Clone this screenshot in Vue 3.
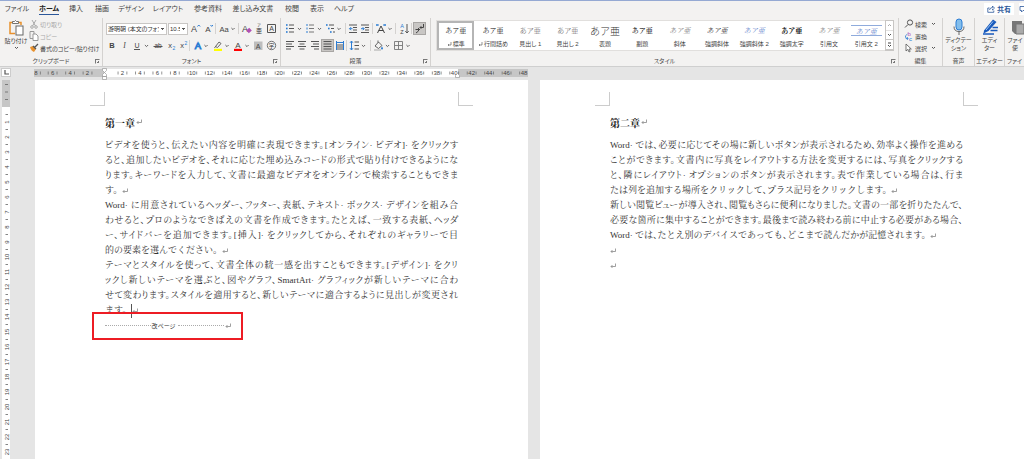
<script setup>
const tabs = ['ファイル', 'ホーム', '挿入', '描画', 'デザイン', 'レイアウト', '参考資料', '差し込み文書', '校閲', '表示', 'ヘルプ']

const chev = (x) => `<path d="M${x - 1.6} 6l1.6 1.6L${x + 1.6} 6" fill="none" stroke="#555" stroke-width=".9"/>`
const letter = (t, x, y, size, extra = '') => `<text x="${x}" y="${y}" font-size="${size}" text-anchor="middle" fill="#444" ${extra}>${t}</text>`
const lines = (list, color = '#555') => list.map(([x1, x2, y]) => `<path d="M${x1} ${y}H${x2}" stroke="${color}" stroke-width="1"/>`).join('')
const dots = (list) => list.map(([x, y]) => `<rect x="${x}" y="${y}" width="1.6" height="1.6" fill="#2b7cd3"/>`).join('')
const stroke = (d, color = '#555', w = 1, extra = '') => `<path d="${d}" fill="none" stroke="${color}" stroke-width="${w}" ${extra}/>`

const fontTop = [
  { n: '拡大', w: 13, s: letter('A', 5, 10, 9) + stroke('M8.5 4.5l1.3-1.5 1.3 1.5', '#2b7cd3') },
  { n: '縮小', w: 13, s: letter('A', 6, 10, 8) + stroke('M8.5 3l1.2 1.4L10.9 3', '#2b7cd3') },
  { sep: true },
  { n: '文字種の変換', w: 21, s: letter('Aa', 7, 9.5, 7.5) + chev(16) },
  { sep: true },
  { n: '書式のクリア', w: 13, s: letter('A', 5, 9.5, 9) + '<path d="M6.3 8.3l3-2.5 2.5 2.6-3 2.8z" fill="#b24fb5"/>' },
  { n: 'ルビ', w: 12, s: letter('ア', 6, 5, 4) + letter('亜', 6, 11, 6) },
  { n: '囲み線', w: 13, s: stroke('M2.5 2.5h8v8h-8z') + letter('A', 6.5, 9.3, 7) }
]
const fontBottom = [
  { n: '太字', w: 12, s: letter('B', 6, 9, 7.5, 'font-weight="bold"') },
  { n: '斜体', w: 13, s: letter('I', 6.5, 9, 7.5, 'font-style="italic" font-family="Liberation Serif"') },
  { n: '下線', w: 20, s: letter('U', 6, 8.5, 7) + lines([[3, 9, 10.5]]) + chev(15.5) },
  { n: '取り消し線', w: 14, s: letter('ab', 7, 9, 6.5) + lines([[2.5, 11.5, 7.5]]) },
  { n: '下付き', w: 12, s: letter('x', 5, 9, 7.5) + letter('2', 9, 11, 5, 'style="fill:#2b7cd3"') },
  { n: '上付き', w: 12, s: letter('x', 5, 9, 7.5) + letter('2', 9, 5.5, 5, 'style="fill:#2b7cd3"') },
  { sep: true },
  { n: '文字の効果', w: 20, s: letter('A', 7, 10, 9.5, 'stroke="#2b7cd3" stroke-width="1" style="fill:#b7dcf5"') + chev(15) },
  { n: '蛍光ペン', w: 20, s: stroke('M4.5 7.5L8 3l2 1.5-3.5 4z M4.5 7.5L3.5 9', '#555', 0.9) + '<rect x="3" y="9.8" width="8" height="2.2" fill="#ffff00"/>' + chev(16) },
  { n: 'フォントの色', w: 20, s: letter('A', 7, 8.5, 8) + '<rect x="3" y="9.8" width="8" height="2.2" fill="#f00"/>' + chev(16) },
  { n: '網かけ', w: 14, s: '<rect x="3" y="2.5" width="8.5" height="8.5" fill="#bdbdbd"/>' + letter('A', 7.2, 9.5, 7) },
  { n: '囲い文字', w: 13, s: '<circle cx="6.5" cy="6.5" r="4.2" fill="none" stroke="#555" stroke-width=".8"/>' + letter('字', 6.5, 8.8, 6) }
]
const paraTop = [
  { n: '箇条書き', w: 20, s: dots([[2, 2.2], [2, 5.7], [2, 9.2]]) + lines([[5, 10, 3], [5, 10, 6.5], [5, 10, 10]]) + chev(15.5) },
  { n: '段落番号', w: 20, s: stroke('M3 2v2M3 5.5v2M3 9v2', '#2b7cd3') + lines([[5, 10, 3], [5, 10, 6.5], [5, 10, 10]], '#777') + chev(15.5) },
  { n: 'アウトライン', w: 21, s: dots([[2, 2.2], [4, 5.7], [6, 9.2]]) + lines([[5, 10, 3], [7, 10, 6.5], [9, 11, 10]]) + chev(15) },
  { sep: true },
  { n: 'インデントを減らす', w: 12, s: lines([[2, 10, 3], [6, 10, 5.5], [6, 10, 8], [2, 10, 10.5]]) + stroke('M5.5 6.7H2.5M4 5.2L2.5 6.7 4 8.2', '#2b7cd3') },
  { n: 'インデントを増やす', w: 13, s: lines([[2, 10, 3], [6, 10, 5.5], [6, 10, 8], [2, 10, 10.5]]) + stroke('M2 6.7h3M3.7 5.2l1.5 1.5-1.5 1.5', '#2b7cd3') },
  { sep: true },
  { n: '拡張書式', w: 21, s: stroke('M3.5 11L7 4l3.5 7M4.8 8.5h4.4', '#444') + stroke('M2 3h3M3 2v2M9 3h3M11 2v2', '#2b7cd3') + chev(16) },
  { sep: true },
  { n: '並べ替え', w: 14, s: letter('A', 5, 6, 5.5, 'style="fill:#2b7cd3"') + letter('Z', 5, 11.5, 5.5) + stroke('M10 2v9M8.3 9.2L10 11l1.7-1.8') },
  { sep: true },
  { n: '編集記号', w: 13, on: true, s: stroke('M10.5 2v3.5H7M8.3 4.2L7 5.5l1.3 1.3', '#444') + stroke('M7 7.5H2.5M5.5 6v3L3 11', '#444') }
]
const paraBottom = [
  { n: '左揃え', w: 12, s: lines([[2, 10, 2.5], [2, 8, 5], [2, 10, 7.5], [2, 7, 10]]) },
  { n: '中央揃え', w: 13, s: lines([[2, 10, 2.5], [3.5, 8.5, 5], [2, 10, 7.5], [3.5, 8.5, 10]]) },
  { n: '右揃え', w: 12, s: lines([[2, 10, 2.5], [4, 10, 5], [2, 10, 7.5], [5, 10, 10]]) },
  { n: '両端揃え', w: 13, on: true, s: lines([[2.5, 10.5, 2.5], [2.5, 10.5, 5], [2.5, 10.5, 7.5], [2.5, 10.5, 10]]) },
  { n: '均等割り付け', w: 12, s: lines([[2, 10, 6], [2, 10, 8], [2, 10, 10]]) + stroke('M2.5 2v9M9.5 2v9M2 3.5h8', '#2b7cd3') },
  { sep: true },
  { n: '行間', w: 22, s: stroke('M3.5 2v9M2 3.8L3.5 2 5 3.8M2 9.2L3.5 11 5 9.2', '#2b7cd3') + lines([[6.5, 11, 3], [6.5, 11, 6.5], [6.5, 11, 10]]) + chev(15.5) },
  { sep: true },
  { n: '塗りつぶし', w: 20, s: stroke('M3 7l3.5-4 3.5 3.5-3.5 3zM6 3.5V1.5', '#555', 0.9) + '<path d="M10 7.5q2 3 0 3t0-3z" fill="#2b7cd3"/>' + lines([[2, 9, 11]], '#aaa') + chev(15.5) },
  { n: '罫線', w: 21, s: stroke('M2.5 2.5h8v8h-8zM6.5 2.5v8M2.5 6.5h8', '#777', 0.9) + chev(16) }
]

const styles = [
  { label: '標準', mark: true, selected: true },
  { label: '行間詰め', mark: true },
  { label: '見出し 1', kind: 'gothic' },
  { label: '見出し 2', kind: 'gothic' },
  { label: '表題', kind: 'gothic large' },
  { label: '副題', kind: 'strong' },
  { label: '斜体', kind: 'italic light' },
  { label: '強調斜体', kind: 'italic' },
  { label: '強調斜体 2', kind: 'italic blue' },
  { label: '強調太字', kind: 'bold' },
  { label: '引用文', kind: 'italic light' },
  { label: '引用文 2', kind: 'italic blue ruled' }
]

const edits = [
  { label: '検索', arrow: true, s: '<circle cx="6" cy="3.5" r="2.6" fill="none" stroke="#555"/><path d="M4 5.5L1 8.5" stroke="#555"/>' },
  { label: '置換', s: '<text x="3.5" y="5" font-size="6" fill="#b24fb5">b</text><text x="5" y="9.5" font-size="6" fill="#2b7cd3">c</text><path d="M3.5 3Q0 4.5 2 7.5h2M3 6l1 1.5L3 9" fill="none" stroke="#2b7cd3" stroke-width=".8"/>' },
  { label: '選択', arrow: true, s: '<path d="M2 1v7l1.800-1.600L5 9l1.200-.6L5 6h2.300z" fill="#fff" stroke="#555" stroke-width=".8"/>' }
]

const PITCH = 8.73
const ORIGIN = 71
const hNumbers = [-8, -6, -4, -2, ...Array.from({ length: 24 }, (_, i) => (i + 1) * 2)].map((n) => ({ n: Math.abs(n), x: n === -8 ? 2 : ORIGIN + n * PITCH }))
const vNumbers = Array.from({ length: 23 }, (_, i) => ({ n: i + 1, y: 42 + i * 15 }))

const pages = [
  {
    title: '第一章',
    lines: [
      { t: 'ビデオを使うと、伝えたい内容を明確に表現できます。[オンライン· ビデオ]· をクリックす' },
      { t: 'ると、追加したいビデオを、それに応じた埋め込みコードの形式で貼り付けできるようにな' },
      { t: 'ります。キーワードを入力して、文書に最適なビデオをオンラインで検索することもできま' },
      { t: 'す。', end: true },
      { t: 'Word· に用意されているヘッダー、フッター、表紙、テキスト· ボックス· デザインを組み合' },
      { t: 'わせると、プロのようなできばえの文書を作成できます。たとえば、一致する表紙、ヘッダ' },
      { t: 'ー、サイドバーを追加できます。[挿入]· をクリックしてから、それぞれのギャラリーで目' },
      { t: '的の要素を選んでください。', end: true },
      { t: 'テーマとスタイルを使って、文書全体の統一感を出すこともできます。[デザイン]· をクリ' },
      { t: 'ックし新しいテーマを選ぶと、図やグラフ、SmartArt· グラフィックが新しいテーマに合わ' },
      { t: 'せて変わります。スタイルを適用すると、新しいテーマに適合するように見出しが変更され' },
      { t: 'ます。', end: true, caret: true }
    ],
    pageBreak: true
  },
  {
    title: '第二章',
    lines: [
      { t: 'Word· では、必要に応じてその場に新しいボタンが表示されるため、効率よく操作を進める' },
      { t: 'ことができます。文書内に写真をレイアウトする方法を変更するには、写真をクリックする' },
      { t: 'と、隣にレイアウト· オプションのボタンが表示されます。表で作業している場合は、行ま' },
      { t: 'たは列を追加する場所をクリックして、プラス記号をクリックします。', end: true },
      { t: '新しい閲覧ビューが導入され、閲覧もさらに便利になりました。文書の一部を折りたたんで、' },
      { t: '必要な箇所に集中することができます。最後まで読み終わる前に中止する必要がある場合、' },
      { t: 'Word· では、たとえ別のデバイスであっても、どこまで読んだかが記憶されます。', end: true },
      { t: '', end: true },
      { t: '', end: true }
    ]
  }
]
</script>

<template>
  <div class="app">
    <header class="tabbar">
      <nav class="tabs">
        <button v-for="t in tabs" :key="t" class="tab" :class="{ active: t === 'ホーム' }"><span>{{ t }}</span></button>
      </nav>
      <div class="share-area">
        <button class="share">
          <svg width="8" height="8" viewBox="0 0 8 8"><path d="M2.5 3H.8v4.300h6V5.500M2.500 5q.5-2.500 3-2.500V1L7.500 3.200 5.500 5V3.800" fill="none" stroke="#2b579a" stroke-width=".8" /></svg>
          共有
        </button>
        <button class="share comment" aria-label="コメント"><svg width="5" height="8" viewBox="0 0 5 8"><path d="M5 1.500H1v4h1.500V7L4 5.500h1" fill="none" stroke="#2b579a" stroke-width=".8" /></svg></button>
      </div>
    </header>

    <section class="ribbon">
      <div class="group clipboard">
        <div class="body clip">
          <button class="paste">
            <svg width="18" height="17" viewBox="0 0 18 17"><path d="M8 14.500H3V3.500h11V6" fill="none" stroke="#e8912d" stroke-width="1.500" /><path d="M5.500 4.500V2.500h2q1-2 2 0h2v2z" fill="#fff" stroke="#666" stroke-width=".9" /><rect x="9" y="7" width="7" height="9" fill="#fff" stroke="#666" /></svg>
            <span>貼り付け</span>
            <svg class="chev" viewBox="0 0 5 4"><path d="M1 1l1.500 1.500L4 1" /></svg>
          </button>
          <div class="stack">
            <button class="item off"><svg width="10" height="10" viewBox="0 0 10 10"><path d="M3 1l3.500 6M7 1L3.500 7" stroke="#aaa" /><circle cx="3" cy="8" r="1.300" fill="none" stroke="#aaa" /><circle cx="7" cy="8" r="1.300" fill="none" stroke="#aaa" /></svg>切り取り</button>
            <button class="item off"><svg width="10" height="10" viewBox="0 0 10 10"><path d="M4 7.500H1v-7h4V3" fill="none" stroke="#999" /><path d="M4 3h3l2 2v4.500H4z" fill="#fff" stroke="#999" /></svg>コピー</button>
            <button class="item"><svg width="10" height="10" viewBox="0 0 10 10"><path d="M1 4l3-1 3 3-2 3q-3-1-4-5z" fill="#e8912d" /><path d="M4 3l3 3M5.500 4.500L9 1" stroke="#555" stroke-width="1.300" /></svg>書式のコピー/貼り付け</button>
          </div>
        </div>
        <div class="foot"><span>クリップボード</span><i class="launch"></i></div>
      </div>

      <div class="group font">
        <div class="body rows">
          <div class="row">
            <select class="combo family" aria-label="フォント"><option>游明朝 (本文のフォン</option></select>
            <select class="combo size" aria-label="フォント サイズ"><option>10.5</option></select>
            <template v-for="(b, i) in fontTop" :key="i">
              <i v-if="b.sep" class="sep"></i>
              <button v-else :aria-label="b.n"><svg :width="b.w" height="13" :viewBox="`0 0 ${b.w} 13`" v-html="b.s"></svg></button>
            </template>
          </div>
          <div class="row">
            <template v-for="(b, i) in fontBottom" :key="i">
              <i v-if="b.sep" class="sep"></i>
              <button v-else :aria-label="b.n"><svg :width="b.w" height="13" :viewBox="`0 0 ${b.w} 13`" v-html="b.s"></svg></button>
            </template>
          </div>
        </div>
        <div class="foot"><span>フォント</span><i class="launch"></i></div>
      </div>

      <div class="group para">
        <div class="body rows">
          <div v-for="(r, k) in [paraTop, paraBottom]" :key="k" class="row">
            <template v-for="(b, i) in r" :key="i">
              <i v-if="b.sep" class="sep"></i>
              <button v-else :aria-label="b.n" :class="{ on: b.on }"><svg :width="b.w" height="13" :viewBox="`0 0 ${b.w} 13`" v-html="b.s"></svg></button>
            </template>
          </div>
        </div>
        <div class="foot"><span>段落</span><i class="launch"></i></div>
      </div>

      <div class="group style-group">
        <div class="body gallery-wrap">
          <div class="gallery">
            <button v-for="s in styles" :key="s.label" class="style" :class="{ selected: s.selected }">
              <span class="sample" :class="s.kind">あア亜</span>
              <span class="name"><svg v-if="s.mark" width="5" height="5" viewBox="0 0 5 5"><path d="M4 0v3H1M2 2L1 3l1 1" fill="none" stroke="#666" stroke-width=".7" /></svg>{{ s.label }}</span>
            </button>
          </div>
          <div class="scroller">
            <button class="dim" aria-label="前へ"><svg class="chev" viewBox="0 0 5 4"><path d="M1 3l1.500-1.500L4 3" /></svg></button>
            <button aria-label="次へ"><svg class="chev" viewBox="0 0 5 4"><path d="M1 1l1.500 1.500L4 1" /></svg></button>
            <button aria-label="その他"><svg width="5" height="6" viewBox="0 0 5 6"><path d="M1 1h3M1 3l1.500 1.500L4 3" fill="none" stroke="#444" /></svg></button>
          </div>
        </div>
        <div class="foot"><span>スタイル</span><i class="launch"></i></div>
      </div>

      <div class="group edit">
        <div class="body stack">
          <button v-for="e in edits" :key="e.label" class="item">
            <svg width="10" height="10" viewBox="0 0 10 10" v-html="e.s"></svg>{{ e.label }}
            <svg v-if="e.arrow" class="chev" viewBox="0 0 5 4"><path d="M1 1l1.500 1.500L4 1" /></svg>
          </button>
        </div>
        <div class="foot"><span>編集</span></div>
      </div>

      <div class="group voice">
        <button class="body big">
          <svg width="18" height="18" viewBox="0 0 18 18"><rect x="6" y="1" width="6" height="11" rx="3" fill="#83beec" stroke="#2b7cd3" /><path d="M4 8.500q0 5 5 5t5-5M9 13.500v3.500" fill="none" stroke="#666" /></svg>
          <span>ディクテー<br>ション</span>
        </button>
        <div class="foot"><span>音声</span></div>
      </div>

      <div class="group editor">
        <button class="body big">
          <svg width="18" height="18" viewBox="0 0 18 18"><path d="M3 12.500L12 1.500l3.500 2.500-8 9-5 2.500z" fill="#185abd" /><path d="M5 12l7-8.500" stroke="#9cc3f0" /><path d="M11.500 9.500H17M9.500 12.500h7M2 16h11" stroke="#185abd" stroke-width="1.700" /></svg>
          <span>エディ<br>ター</span>
        </button>
        <div class="foot"><span>エディター</span></div>
      </div>

      <div class="group reuse">
        <button class="body big">
          <svg width="18" height="18" viewBox="0 0 18 18"><path d="M6 3h10v13H9l-3-3z" fill="#777" /><path d="M10 6h8v10h-8z" fill="#aaa" stroke="#777" /></svg>
          <span>ファイ<br>使</span>
        </button>
        <div class="foot"><span>ファイ</span></div>
      </div>
    </section>

    <main class="workspace">
      <div class="ruler-row">
        <div class="tabstop"><svg width="5" height="5" viewBox="0 0 5 5"><path d="M1 0v4h4" fill="none" stroke="#555" stroke-width="1.200" /></svg></div>
        <svg class="hruler" width="494" height="12" viewBox="0 0 494 12">
          <rect y="1" width="494" height="8" fill="#fff" />
          <rect y="1" width="71" height="8" fill="#c6c6c6" />
          <rect x="424" y="1" width="70" height="8" fill="#c6c6c6" />
          <g v-for="m in hNumbers" :key="m.x">
            <text :x="m.x" y="7.300" text-anchor="middle">{{ m.n }}</text>
            <path :d="`M${m.x + 4.4} 3.5v3M${m.x - 4.4} 3.5v3`" stroke="#666" stroke-width=".7" />
          </g>
          <path d="M68.500 .5h4v2l-2 2-2-2zM68.500 8.500v-2l2-2 2 2v2zM68.500 8.500h4v3h-4z" fill="#fff" stroke="#999" stroke-width=".7" />
          <path d="M421.500 9.500v-2l2-2 2 2v2z" fill="#fff" stroke="#999" stroke-width=".7" />
        </svg>
      </div>
      <div class="canvas">
        <svg class="vruler" width="8" height="379" viewBox="0 0 8 379">
          <rect width="8" height="379" fill="#fff" />
          <rect width="8" height="27" fill="#c6c6c6" />
          <path d="M3 4.500h3M3 12h3M3 19.500h3" stroke="#666" stroke-width=".8" />
          <g v-for="m in vNumbers" :key="m.n">
            <path :d="`M3.5 ${m.y - 7.5}h2.5`" stroke="#666" stroke-width=".8" />
            <text :transform="`translate(7 ${m.y}) rotate(-90)`" text-anchor="middle">{{ m.n }}</text>
          </g>
        </svg>
        <article v-for="p in pages" :key="p.title" class="page">
          <div class="corners"><i></i><i></i></div>
          <h1>{{ p.title }}<svg class="ret" viewBox="0 0 6 6"><path d="M5.500 .5v3H1M2.500 2L1 3.500 2.500 5" /></svg></h1>
          <p v-for="(l, i) in p.lines" :key="i" :class="{ full: !l.end, blank: !l.t }">{{ l.t }}<i v-if="l.caret" class="caret"></i><svg v-if="l.end" class="ret" viewBox="0 0 6 6"><path d="M5.500 .5v3H1M2.500 2L1 3.500 2.500 5" /></svg></p>
          <div v-if="p.pageBreak" class="break">
            <i class="dash"></i><span>改ページ</span><i class="dash"></i><svg class="ret" viewBox="0 0 6 6"><path d="M5.500 .5v3H1M2.500 2L1 3.500 2.500 5" /></svg>
            <div class="highlight"></div>
          </div>
        </article>
      </div>
    </main>
  </div>
</template>

<style>
body { margin: 0; background: #fff; overflow: hidden; }
</style>

<style scoped>
.app { font-family: "Liberation Sans", "Noto Sans CJK JP", sans-serif; font-size: 6px; color: #444; font-feature-settings: "palt"; padding-bottom: 15px; }
.app * { box-sizing: border-box; }
button { font: inherit; font-feature-settings: inherit; color: inherit; background: none; border: 0; padding: 0; white-space: nowrap; }
svg { display: block; flex: none; }
.chev { width: 5px; height: 4px; fill: none; stroke: #555; }

.tabbar { display: flex; justify-content: space-between; height: 18px; background: #f3f2f1; border-top: 1px solid #95a9d3; overflow: hidden; }
.tabs { display: grid; grid-template-columns: 34px 30px 24px 28px 30px 44px 36px 54px 24px 26px 28px; font-size: 7px; }
.tab { display: flex; justify-content: center; align-items: flex-start; padding-top: 2px; }
.tab span { line-height: 11px; padding-bottom: 1px; }
.active { font-weight: bold; color: #222; }
.active span { border-bottom: 1px solid #2b579a; padding-bottom: 0; }
.share-area { display: flex; gap: 5px; padding-top: 2px; }
.share { display: flex; align-items: center; justify-content: center; gap: 2px; width: 30px; height: 12px; background: #fff; color: #2b579a; font-weight: bold; font-size: 7px; }
.comment { width: 5px; }

.ribbon { display: flex; height: 49px; background: #f3f2f1; border-bottom: 1px solid #cfcfcf; overflow: hidden; }
.group { display: flex; flex-direction: column; flex: none; border-right: 1px solid #d4d2d0; overflow: hidden; }
.body { height: 39px; }
.foot { display: grid; grid-template-columns: 7px 1fr 7px; align-items: center; height: 9px; line-height: 9px; text-align: center; white-space: nowrap; }
.foot span { grid-column: 2; }
.launch { width: 5px; height: 5px; border: 1px solid #777; border-right-color: transparent; border-bottom-color: transparent; background: linear-gradient(135deg, transparent 55%, #777 55%); }
.clipboard { width: 103px; }
.clip { display: flex; gap: 2px; padding-left: 5px; }
.paste { display: flex; flex-direction: column; align-items: center; gap: 1px; width: 22px; padding-top: 1px; }
.paste span { line-height: 8px; }
.stack { display: flex; flex-direction: column; }
.item { display: flex; align-items: center; height: 12px; gap: 1px; }
.off { color: #aaa; }
.font { width: 178px; }
.para { width: 150px; }
.rows { display: flex; flex-direction: column; gap: 4px; padding: 4px 0 0 3px; }
.row { display: flex; align-items: center; height: 13px; }
.row button { height: 13px; }
.sep { width: 1px; height: 11px; margin-right: 1px; background: #d4d2d0; }
.on { background: #c8c6c4; outline: 1px solid #a8a6a4; outline-offset: -1px; }
.combo { appearance: none; height: 12px; border: 1px solid #c8c6c4; border-radius: 0; padding: 0 7px 0 1px; font: inherit; color: #333; background: linear-gradient(45deg, transparent 50%, #555 50%) right 3px center / 2px 2px no-repeat, linear-gradient(-45deg, transparent 50%, #555 50%) right 1px center / 2px 2px no-repeat, #fff; }
.family { width: 61px; margin-right: 1px; }
.size { width: 20px; margin-right: 1px; }
.style-group { flex: 1; }
.gallery-wrap { display: flex; padding: 2px 4px 6px 5px; }
.gallery { flex: 1; display: grid; grid-template-columns: repeat(12, 1fr); background: #fff; border: 1px solid #e1dfdd; border-right: 0; }
.style { display: flex; flex-direction: column; align-items: center; justify-content: space-between; padding: 2px 0 1px; overflow: hidden; }
.selected { outline: 2px solid #b5b5b5; outline-offset: -2px; }
.sample { display: flex; align-items: center; justify-content: center; height: 14px; font-family: "Noto Serif CJK JP", "Noto Sans CJK JP", serif; font-size: 7px; color: #222; font-feature-settings: normal; }
.name { display: flex; align-items: center; gap: 1px; line-height: 9px; }
.gothic { font-family: "Noto Sans CJK JP", sans-serif; font-weight: 300; color: #555; }
.light { color: #777; }
.large { font-size: 10px; color: #333; }
.strong { font-weight: 500; }
.bold { font-weight: bold; color: #111; }
.italic { font-style: italic; }
.blue { color: #5f83cc; }
.ruled { height: 11px; margin-top: 2px; width: 31px; border: solid #8fabdc; border-width: 1px 0; }
.scroller { width: 9px; display: grid; grid-template-rows: repeat(3, 1fr); border: 1px solid #c8c6c4; background: #fff; }
.scroller button { display: flex; align-items: center; justify-content: center; border-bottom: 1px solid #c8c6c4; min-height: 0; }
.dim { opacity: .5; }
.edit { width: 44px; }
.edit .stack { padding-left: 5px; }
.edit .item .chev { margin-left: 3px; }
.voice { width: 32px; }
.editor { width: 30px; }
.reuse { width: 19px; border: 0; }
.big { display: flex; flex-direction: column; align-items: center; line-height: 8px; }
.voice .foot, .editor .foot, .reuse .foot { grid-template-columns: 0 1fr 0; }
.reuse .big { padding-left: 1px; }

.workspace { background: #e5e5e5; overflow: hidden; }
.ruler-row { display: flex; height: 13px; padding-top: 1px; }
.tabstop { display: flex; align-items: center; justify-content: center; width: 10px; height: 9px; background: #fff; border: 1px solid #ccc; margin: 0 23px 0 1px; }
.hruler text, .vruler text { font-size: 6px; fill: #444; }
.canvas { display: flex; gap: 12px; padding-left: 2px; }
.vruler { margin-right: 13px; }
.page { flex: none; width: 493px; min-height: 379px; padding: 0 70px; background: #fff; font-family: "Liberation Serif", "Noto Serif CJK JP", "Noto Sans CJK JP", serif; font-size: 9px; color: #333; }
.corners { display: flex; justify-content: space-between; height: 27px; margin: 0 -15px; padding-top: 13px; }
.corners i { width: 15px; height: 14px; margin-top: -1px; border: solid #ccc; border-width: 0 1px 1px 0; }
.corners i + i { border-width: 0 0 1px 1px; }
h1 { display: flex; align-items: center; height: 30px; margin: 0 0 1px; font-size: 10px; font-weight: bold; color: #222; font-feature-settings: normal; }
p { display: flex; align-items: center; height: 15px; line-height: 15px; margin: 0; white-space: nowrap; font-feature-settings: "halt"; }
.full { display: block; text-align: justify; text-align-last: justify; font-feature-settings: "palt"; }
.ret { width: 6px; height: 6px; fill: none; stroke: #888; stroke-width: .8; margin-left: 1px; }
p .ret { margin-left: 4px; }
.blank .ret { margin-left: 0; }
.caret { width: 1px; height: 14px; margin-left: 4px; background: #555; }
.caret + .ret { margin-left: 0; }
.break { position: relative; display: flex; align-items: center; width: 126px; height: 15px; font-family: "Liberation Sans", "Noto Sans CJK JP", sans-serif; font-size: 6px; }
.break span { flex: none; margin: 0 3px 0 1px; white-space: nowrap; }
.dash { flex: 1; border-top: 1px dotted #aaa; }
.highlight { position: absolute; top: -6px; left: -13px; width: 151px; height: 28px; border: 2px solid #ed1c24; }
</style>
